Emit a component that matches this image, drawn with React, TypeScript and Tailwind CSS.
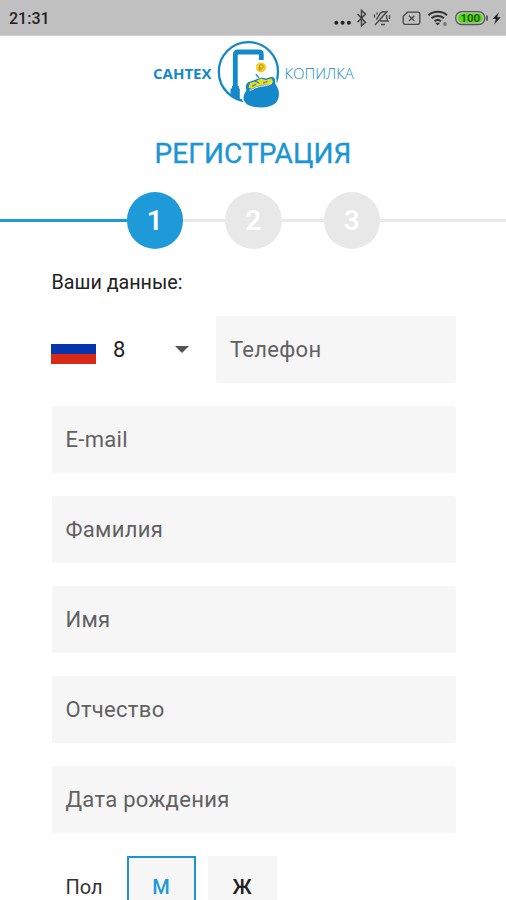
import React, { useState } from "react";
import clsx from "clsx";

const fields = ["E-mail", "Фамилия", "Имя", "Отчество", "Дата рождения"];

const StatusIcons = () => (
  <svg className="h-9 w-[176px]" viewBox="330 1 176 36" fill="none" stroke="#444" strokeWidth="1.3">
    <g fill="#222" stroke="none">
      <circle cx="336.3" cy="22.8" r="2" />
      <circle cx="342.6" cy="22.8" r="2" />
      <circle cx="348.9" cy="22.8" r="2" />
    </g>
    {/* bluetooth */}
    <path d="M357.500 14l8 8.200-4 3.600V10.400l4 3.600-8 8.200" strokeWidth="1.500" />
    {/* muted bell */}
    <path d="M375 25l12.500-14M376 19.500c3-1.500 2.500-7 7-7.800l3 .3M386.500 15c-.5 3 .5 4.500 1.500 6h-8M381 24.500h4M374.500 14.500v3M377 12.500v2M389.500 15v4" />
    {/* no sim */}
    <path d="M407.500 12.200h10.500a1.800 1.800 0 0 1 1.800 1.800v8.500a1.800 1.800 0 0 1-1.800 1.800h-13a1.800 1.800 0 0 1-1.800-1.800v-6.300z" />
    <path d="M409 15.700l5.400 5.200M414.400 15.700l-5.400 5.200" />
    {/* wifi */}
    <path d="M428.500 15.300c5-4.600 13.500-4.600 18.500 0M431.500 18.300c3.500-3 9-3 12.500 0M434.500 21.200c2-1.600 4.500-1.600 6.500 0" stroke="#333" strokeWidth="2" />
    <path d="M435.200 22.800h5l-2.500 2.700z" fill="#333" stroke="none" />
    <circle cx="445" cy="24" r="1.900" fill="#777" stroke="none" />
    {/* battery */}
    <rect x="455.700" y="11.700" width="29" height="12.800" rx="6" stroke="#555" />
    <rect x="458" y="13.600" width="24.500" height="9" rx="4.300" fill="#52dc0a" stroke="none" />
    <path d="M487 15.500v5.300" stroke="#555" strokeWidth="1.800" />
    <text x="470.300" y="22.200" textAnchor="middle" fill="#245c10" stroke="none" fontFamily="Roboto, sans-serif" fontSize="11.500" fontWeight="700">
      100
    </text>
    <path d="M499 12l-6.500 7h3.500l-2 5.500 6.800-7.200h-3.600z" fill="#222" stroke="none" />
  </svg>
);

const LogoMark = () => (
  <svg className="h-[72px] w-[66px] shrink-0" viewBox="216 39 66 72" fill="none">
    <circle cx="248.400" cy="71.700" r="29.600" stroke="#1489c9" strokeWidth="2.300" />
    <path d="M235.300 90V55q0-3 3-3h20.500q2.500 0 2.500 2.500V60" stroke="#1489c9" strokeWidth="4.800" />
    <path d="M230.500 96V88.500h1.500V86h6.800v2.500h1V101z" fill="#1489c9" />
    {/* coin */}
    <circle cx="261" cy="67.400" r="5" fill="#f2cf22" />
    <path d="M259.700 70.500v-5.700h2a1.700 1.700 0 0 1 0 3.400h-3.200M258.500 69.700h3" stroke="#b88f25" strokeWidth=".9" />
    {/* purse */}
    <path
      d="M246.500 90c-2-4 0-8 4-8.500l6.500-2.500 4.500-1.500 4.500 1 5-1.500c3-.5 4.500 1.500 4 4.500 0 4 4 6 4 12.500 0 10-8.500 13.500-17.500 13.500-10.300 0-18-3-18-9.700 0-3.500 2-5.300 3-7.800z"
      fill="#1489c9"
      stroke="#fff"
      strokeWidth="3"
      paintOrder="stroke"
    />
    <path d="M248.500 87.500l1.500-4.500 6.500-2 4.500-2.500 4.500 1.500 6-1.500 1.500 3-1.500 2.500c-5 1-9 .5-13.500 2l-6.500 3z" fill="#f0dc1c" />
    <path d="M249.500 90c3.500.8 4.500-2.300 9-3.200 5-1.300 9.500-.5 13.500-3.800" stroke="#fff" strokeWidth="1" />
    <path d="M256.200 74.800l2.300 2.500M255.500 81.500l3.500 1.500M263.500 83l3.500-1.500M252.500 86l3-1.500" stroke="#1489c9" strokeWidth="1.300" strokeLinecap="round" />
  </svg>
);

interface StepProps {
  value: number;
  active?: boolean;
}

const Step = ({ value, active }: StepProps) => (
  <div
    className={clsx(
      "flex size-[56.5px] shrink-0 items-center justify-center rounded-full pt-px text-[28px] font-semibold text-white",
      active ? "bg-[#1e9ad9]" : "bg-[#e8e8e8]"
    )}
  >
    {value}
  </div>
);

const Field = ({ label }: { label: string }) => (
  <div className="flex h-[67px] w-full items-center rounded-[2px] bg-[#f6f6f6] px-3.5 text-[22px] tracking-[0.3px] text-[#616161]">
    {label}
  </div>
);

export default function App() {
  const [gender, setGender] = useState("М");

  return (
    <div className="h-[900px] w-[506px] overflow-hidden bg-white font-['Roboto',sans-serif] text-[#222]">
      <header className="flex h-9 items-center justify-between border-b border-[#cfcfcf] bg-[#c0c0c0] pt-0.5 pl-[9px]">
        <span className="text-base font-medium text-[#222]">21:31</span>
        <StatusIcons />
      </header>

      <div className="mt-[3px] flex h-[72px] justify-center font-['Open_Sans',sans-serif] text-[#1489c9]">
        <span className="w-[63px] pt-[24px] text-[15px] leading-5 font-bold">САНТЕХ</span>
        <LogoMark />
        <span className="w-[71px] pt-[24px] pl-[2.5px] text-[15px] leading-5 font-light">КОПИЛКА</span>
      </div>

      <h1 className="mt-[26px] text-center text-[28px] leading-[34px] font-normal tracking-[0.1px] text-[#1b95d4] [-webkit-text-stroke:0.35px_#1b95d4]">
        РЕГИСТРАЦИЯ
      </h1>

      <div className="mt-[21px] flex items-center">
        <div className="h-[3px] w-[126.5px] bg-[#1e9ad9]" />
        <Step value={1} active />
        <div className="h-[3px] w-[42px] bg-[#e8e8e8]" />
        <Step value={2} />
        <div className="h-[3px] w-[42px] bg-[#e8e8e8]" />
        <Step value={3} />
        <div className="h-[3px] flex-1 bg-[#e8e8e8]" />
      </div>

      <main className="pr-[50px] pl-[51.5px]">
        <p className="mt-[21px] text-[19.7px] leading-[26px]">Ваши данные:</p>

        <div className="mt-5 -ml-[0.5px] flex">
          <div className="flex w-[165px] shrink-0 items-center">
            <div className="flex h-[29px] w-[45px] flex-col">
              <div className="h-[9px] bg-white" />
              <div className="h-2.5 bg-[#0735ac]" />
              <div className="h-2.5 bg-[#d92a18]" />
            </div>
            <span className="ml-[17px] text-[22px]">8</span>
            <div className="ml-[50px] border-x-[7px] border-t-[7px] border-x-transparent border-t-[#555]" />
          </div>
          <Field label="Телефон" />
        </div>

        <div className="mt-[23px] flex flex-col gap-[23px]">
          {fields.map((label) => (
            <Field key={label} label={label} />
          ))}
        </div>

        <div className="mt-[23px] flex h-[62px] items-center">
          <span className="w-[75px] pl-3.5 text-[20px] text-[#333]">Пол</span>
          {["М", "Ж"].map((item) => (
            <button
              key={item}
              onClick={() => setGender(item)}
              className={clsx(
                "mr-[12px] h-full w-[69px] bg-[#f6f6f6] text-[20px] font-medium",
                gender === item ? "border-2 border-[#1e93d2] text-[#1e9ad9]" : "text-[#222]"
              )}
            >
              {item}
            </button>
          ))}
        </div>
      </main>
    </div>
  );
}
